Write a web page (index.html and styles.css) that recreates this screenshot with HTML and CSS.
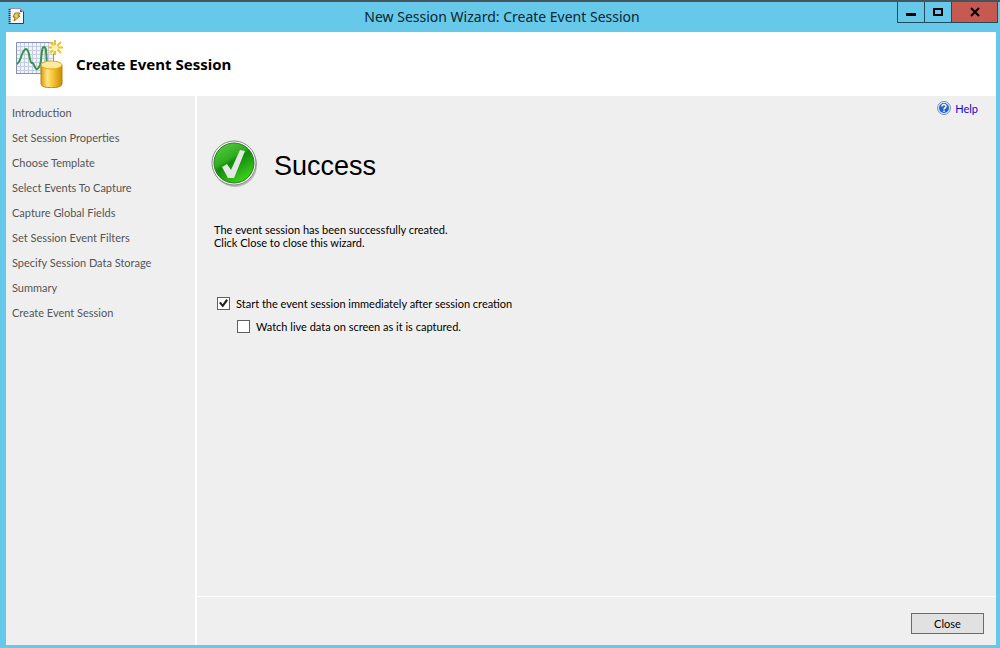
FILE: index.html
```html
<!DOCTYPE html>
<html lang="en">
<head>
    <meta charset="utf-8" />
    <title>New Session Wizard: Create Event Session</title>
    <link rel="stylesheet" href="styles.css">
</head>
<body>
    <div class="window">
        <div class="titlebar">
            <svg class="app-icon" width="16" height="16" viewBox="0 0 16 16">
                <path d="M2 .5h10.500l3 3v12H2z" fill="#f8f8f4" stroke="#8b93ad" />
                <path d="M15.500 3.500v12H2" fill="none" stroke="#2c3c78" />
                <path d="M12 1v3h3z" fill="#3d4f8c" />
                <path d="M1.500 1v15" stroke="#28364a" stroke-width="2" stroke-dasharray="1 1" />
                <path d="M7 5h5l-2 3h2l-6 5 1-4H5z" fill="#f4cb42" stroke="#7a5b18" stroke-width=".8" />
            </svg>
            <span class="title">New Session Wizard: Create Event Session</span>
            <div class="window-buttons">
                <button type="button" class="win-btn" aria-label="Minimize">
                    <svg width="12" height="12" viewBox="0 0 12 12"><path d="M1 7h10v3H1z" /></svg>
                </button>
                <button type="button" class="win-btn" aria-label="Maximize">
                    <svg width="12" height="12" viewBox="0 0 12 12"><path d="M1 2h10v8H1zM3 4v4h6V4z" fill-rule="evenodd" /></svg>
                </button>
                <button type="button" class="win-btn win-close" aria-label="Close window">
                    <svg width="12" height="12" viewBox="0 0 12 12"><path d="M2 2l8 8M10 2l-8 8" stroke="#000" stroke-width="2" /></svg>
                </button>
            </div>
        </div>

        <div class="client">
            <header class="header">
                <svg class="header-icon" width="48" height="48" viewBox="0 0 48 48">
                    <defs>
                        <linearGradient id="gold" x1="0" x2="1" y1="0" y2="0">
                            <stop offset="0" stop-color="#d99a14" />
                            <stop offset=".3" stop-color="#ffe680" />
                            <stop offset=".6" stop-color="#f5c02c" />
                            <stop offset="1" stop-color="#c98a08" />
                        </linearGradient>
                    </defs>
                    <rect x="1" y="2" width="37" height="32" fill="#f1f4fb" />
                    <path d="M5.500 2v32M9.500 2v32M13.500 2v32M17.500 2v32M21.500 2v32M25.500 2v32M29.500 2v32M33.500 2v32M1 6.500h37M1 10.500h37M1 14.500h37M1 18.500h37M1 22.500h37M1 26.500h37M1 30.500h37" stroke="#c3cce3" />
                    <path d="M1.500 34V2.500H38.500V33.500H1" fill="none" stroke="#8290b5" />
                    <path d="M2 24C6 22 7 9 11 9c4 0 3 14 6 14 1 0 1-1 2 2 2 6 4 5 6 0 2-6 1-18 4-18s2 9 3 18" fill="none" stroke="#369445" stroke-width="2" />
                    <circle cx="40" cy="8" r="6" fill="#fff" opacity=".7" />
                    <path d="M40 0v15M33 7.500h15M35 2l11 11M46 2L35 13" stroke="#f0c02a" stroke-width="2" />
                    <circle cx="40" cy="8" r="3" fill="#fff7ae" />
                    <path d="M26 25v19c0 5 21 5 21 0V25z" fill="url(#gold)" stroke="#bd830b" />
                    <ellipse cx="36.500" cy="25" rx="10.500" ry="4" fill="#ffeaa0" stroke="#dda820" />
                </svg>
                <h1>Create Event Session</h1>
            </header>

            <div class="body">
                <nav class="steps">
                    <ul>
                        <li>Introduction</li>
                        <li>Set Session Properties</li>
                        <li>Choose Template</li>
                        <li>Select Events To Capture</li>
                        <li>Capture Global Fields</li>
                        <li>Set Session Event Filters</li>
                        <li>Specify Session Data Storage</li>
                        <li>Summary</li>
                        <li>Create Event Session</li>
                    </ul>
                </nav>

                <main class="content">
                    <div class="page">
                        <a href="#" class="help">
                            <svg width="14" height="14" viewBox="0 0 14 14">
                                <circle cx="7" cy="7" r="6.500" fill="#dbe6f7" stroke="#7d94bd" />
                                <circle cx="7" cy="7" r="5" fill="#2864c8" />
                                <path d="M5 5.500C5 3 9 3 9 5.300 9 7 7 6.800 7 8.500M7 9.500V11" fill="none" stroke="#fff" stroke-width="1.500" />
                            </svg>
                            <span>Help</span>
                        </a>

                        <div class="result">
                            <svg width="48" height="48" viewBox="0 0 48 48">
                                <defs>
                                    <linearGradient id="green" x1="0" x2=".6" y1="0" y2="1">
                                        <stop offset="0" stop-color="#62cf4c" />
                                        <stop offset=".45" stop-color="#2fae1e" />
                                        <stop offset=".55" stop-color="#128a0c" />
                                        <stop offset="1" stop-color="#3ccf1c" />
                                    </linearGradient>
                                </defs>
                                <circle cx="24" cy="25" r="22" fill="#b8b8b8" />
                                <circle cx="23" cy="23" r="22" fill="#fff" stroke="#7f8a7f" />
                                <circle cx="23" cy="23" r="20" fill="url(#green)" stroke="#287a20" />
                                <path d="M11 27l5-3 4 6 9-20 5 1-11 27h-6z" fill="#e4e8e3" />
                            </svg>
                            <h2>Success</h2>
                        </div>

                        <p class="message">The event session has been successfully created.<br>Click Close to close this wizard.</p>

                        <form class="options">
                            <div class="option">
                                <input type="checkbox" id="startSession" checked />
                                <label for="startSession">Start the event session immediately after session creation</label>
                            </div>
                            <div class="option option-sub">
                                <input type="checkbox" id="watchLive" />
                                <label for="watchLive">Watch live data on screen as it is captured.</label>
                            </div>
                        </form>
                    </div>

                    <footer class="footer">
                        <button type="button" class="btn">Close</button>
                    </footer>
                </main>
            </div>
        </div>
    </div>
</body>
</html>
```
FILE: styles.css
```css
* {
    box-sizing: border-box;
}

body {
    margin: 0;
    font-family: Lato, Arial, sans-serif;
    font-size: 11px;
    line-height: 13px;
    color: #000;
}

svg {
    display: block;
    flex: none;
}

h1, h2, p, ul {
    margin: 0;
    padding: 0;
}

.window {
    display: flex;
    flex-direction: column;
    min-height: 100vh;
    padding: 0 4px 3px 6px;
    background-color: #66c9e9;
    border-top: 2px solid #45555e;
}

/* Title bar */
.titlebar {
    display: grid;
    grid-template-columns: 1fr auto 1fr;
    height: 30px;
    margin-right: -2px;
}

.app-icon {
    margin: 6px 0 0 2px;
}

.title {
    font-family: "Noto Sans", "Open Sans", sans-serif;
    font-size: 14px;
    line-height: 30px;
    color: #0b2530;
}

.window-buttons {
    display: flex;
    justify-content: flex-end;
    height: 21px;
}

.win-btn {
    display: flex;
    align-items: center;
    justify-content: center;
    width: 27px;
    padding: 0;
    background-color: transparent;
    border: 1px solid #24495a;
    border-top: none;
    border-right: none;
}

.win-close {
    width: 47px;
    background-color: #c75a50;
    border-right: 1px solid #5d3535;
}

/* Client area */
.client {
    display: flex;
    flex: 1;
    flex-direction: column;
    background-color: #efefef;
}

.header {
    display: flex;
    align-items: center;
    gap: 13px;
    height: 64px;
    padding-left: 9px;
    background-color: #fff;
}

.header h1 {
    font-family: "Noto Sans", "Open Sans", sans-serif;
    font-size: 15px;
    line-height: 20px;
}

.body {
    display: flex;
    flex: 1;
}

.steps {
    width: 191px;
    padding: 4px 6px;
    border-right: 2px solid #fff;
    color: #555;
}

.steps ul {
    list-style: none;
}

.steps li {
    line-height: 25px;
}

.content {
    display: flex;
    flex: 1;
    flex-direction: column;
}

.page {
    flex: 1;
    padding: 4px 18px 0 14px;
}

.help {
    display: flex;
    align-items: center;
    justify-content: flex-end;
    gap: 4px;
    height: 16px;
    color: #1208c8;
    text-decoration: none;
}

.result {
    display: flex;
    align-items: center;
    gap: 15px;
    margin-top: 24px;
}

.result h2 {
    padding-top: 4px;
    font-family: "Liberation Sans", Arial, sans-serif;
    font-size: 27px;
    font-weight: normal;
    line-height: 32px;
}

.message {
    margin: 35px 0 0 3px;
}

.options {
    margin: 43px 0 0 6px;
}

.option {
    display: flex;
    align-items: center;
    gap: 6px;
    height: 23px;
}

.option-sub {
    margin-left: 20px;
}

.option input {
    display: grid;
    place-items: center;
    width: 13px;
    height: 13px;
    margin: 0;
    appearance: none;
    background-color: #fff;
    border: 1px solid #606060;
}

.option input:checked::before {
    content: "";
    width: 9px;
    height: 9px;
    background-color: #222;
    clip-path: polygon(0 45%, 20% 30%, 40% 58%, 80% 0, 100% 18%, 42% 95%);
}

.footer {
    display: flex;
    justify-content: flex-end;
    padding: 16px 12px 11px;
    border-top: 1px solid #fff;
}

.btn {
    width: 73px;
    height: 21px;
    padding: 0;
    background-color: #e1e1e1;
    border: 1px solid #3f789e;
    font: inherit;
    color: #000;
}
```
